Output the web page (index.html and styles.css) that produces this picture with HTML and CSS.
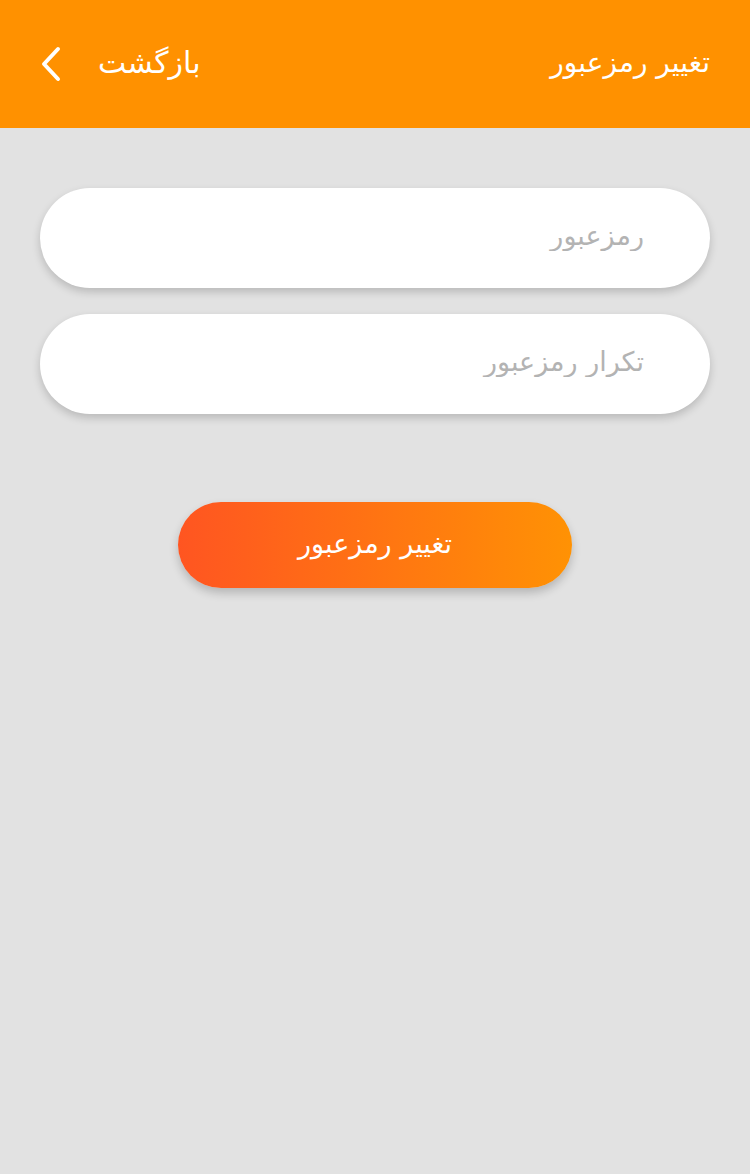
FILE: index.html
```html
<!DOCTYPE html>
<html lang="fa" dir="rtl">
<head>
<meta charset="utf-8">
<title>تغییر رمزعبور</title>
<link rel="stylesheet" href="styles.css">
</head>
<body>
<header class="appbar">
  <h1 class="title">تغییر رمزعبور</h1>
  <a class="back" href="#">
    <span class="back-label">بازگشت</span>
    <svg class="chevron" width="22" height="36" viewBox="0 0 22 36" aria-hidden="true">
      <path d="M18 3 L4 18 L18 33" fill="none" stroke="#fff" stroke-width="4" stroke-linecap="round" stroke-linejoin="round"/>
    </svg>
  </a>
</header>
<main class="content">
  <form class="form">
    <input class="field" type="password" placeholder="رمزعبور">
    <input class="field" type="password" placeholder="تکرار رمزعبور">
    <button class="submit" type="button">تغییر رمزعبور</button>
  </form>
</main>
</body>
</html>
```
FILE: styles.css
```css
* { box-sizing: border-box; }
html, body { margin: 0; padding: 0; }
body {
  width: 750px;
  min-height: 1174px;
  background: #e2e2e2;
  font-family: "DejaVu Sans", "Noto Sans", sans-serif;
}
.appbar {
  height: 128px;
  background: #ff9100;
  display: flex;
  align-items: center;
  justify-content: space-between;
  padding: 0 40px;
  color: #fff;
}
.title {
  margin: 0;
  font-size: 28px;
  font-weight: normal;
  padding-bottom: 4px;
}
.back {
  display: flex;
  align-items: center;
  gap: 36px;
  color: #fff;
  text-decoration: none;
}
.back-label {
  font-size: 30px;
  padding-bottom: 4px;
}
.chevron { display: block; }
.content {
  padding: 60px 40px 0;
}
.form {
  display: flex;
  flex-direction: column;
  align-items: center;
  gap: 26px;
}
.field {
  width: 670px;
  height: 100px;
  border: none;
  border-radius: 50px;
  background: #fff;
  box-shadow: 0 4px 8px rgba(0, 0, 0, 0.18);
  padding: 0 66px 6px 40px;
  font-family: inherit;
  font-size: 27px;
  color: #333;
  outline: none;
}
.field::placeholder { color: #b3b3b3; }
.submit {
  margin-top: 62px;
  width: 394px;
  height: 86px;
  border: none;
  border-radius: 43px;
  background: linear-gradient(90deg, #ff5521 0%, #ff9204 100%);
  box-shadow: 0 5px 10px rgba(0, 0, 0, 0.2);
  color: #fff;
  font-family: inherit;
  font-size: 27px;
  padding-bottom: 4px;
  cursor: pointer;
}
```
